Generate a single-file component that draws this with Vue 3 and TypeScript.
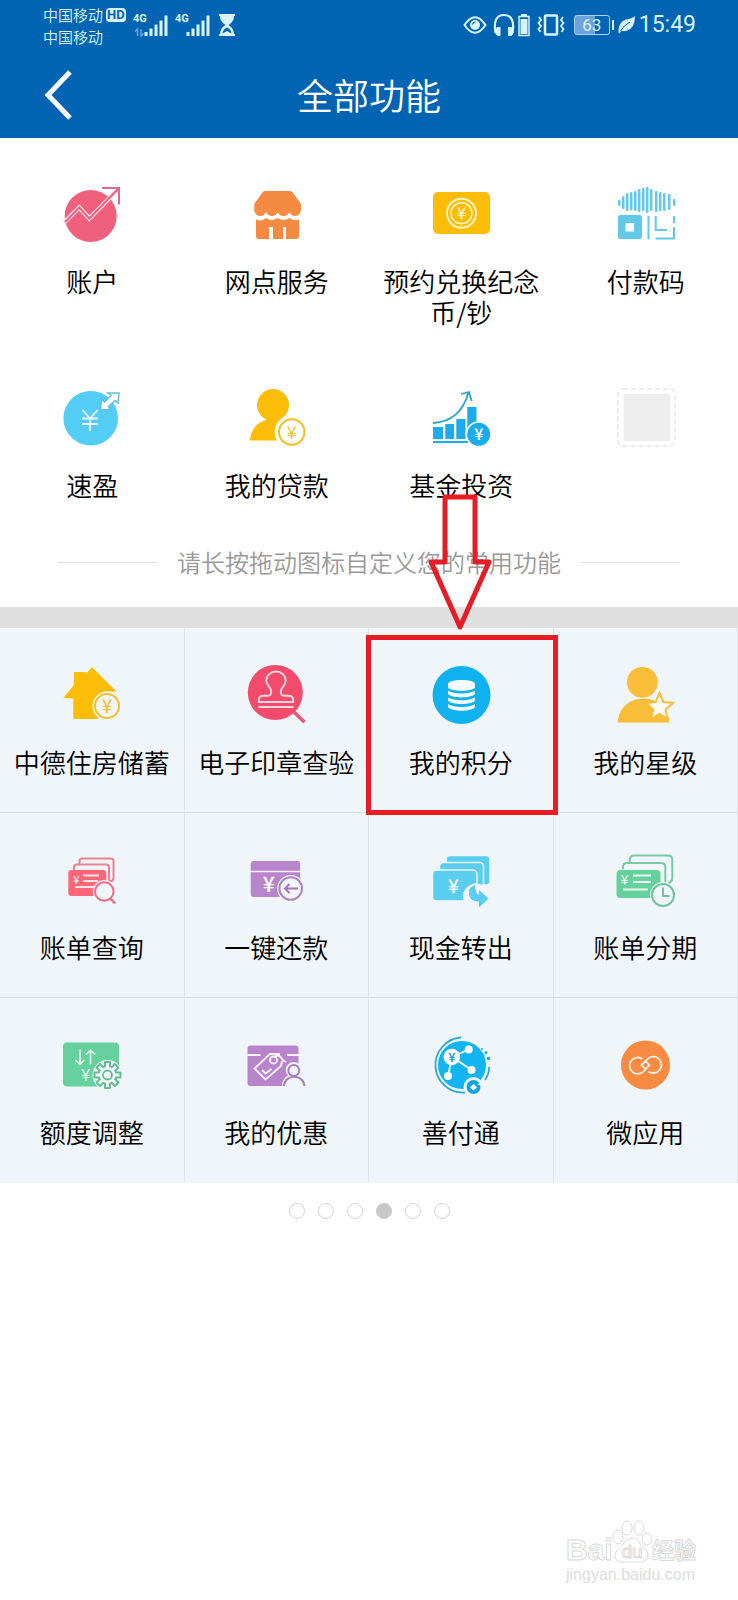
<script setup lang="ts">
interface Feature {
  icon: string
  label: string
  marked?: boolean
}

const favourites: Feature[] = [
  { icon: 'account', label: '账户' },
  { icon: 'branch', label: '网点服务' },
  { icon: 'banknote', label: '预约兑换纪念币/钞' },
  { icon: 'paycode', label: '付款码' },
  { icon: 'quick', label: '速盈' },
  { icon: 'loan', label: '我的贷款' },
  { icon: 'fund', label: '基金投资' },
  { icon: 'empty', label: '' },
]

const features: Feature[] = [
  { icon: 'house', label: '中德住房储蓄' },
  { icon: 'stamp', label: '电子印章查验' },
  { icon: 'points', label: '我的积分', marked: true },
  { icon: 'star', label: '我的星级' },
  { icon: 'bill', label: '账单查询' },
  { icon: 'repay', label: '一键还款' },
  { icon: 'cashout', label: '现金转出' },
  { icon: 'instalment', label: '账单分期' },
  { icon: 'limit', label: '额度调整' },
  { icon: 'offers', label: '我的优惠' },
  { icon: 'paylink', label: '善付通' },
  { icon: 'microapp', label: '微应用' },
]

const pageCount = 6
const currentPage = 4

// Left edge, top and bottom of each vertical stripe of the pay-code roof
const stripes: number[][] = [
  [2, 16, 22], [6, 12, 25], [10, 9, 27], [14, 8, 26], [18, 7, 27], [22, 5, 28], [26, 4, 27],
  [30, 3, 29], [34, 5, 27], [39, 7, 28], [43, 8, 27], [47, 9, 27], [52, 10, 26], [57, 15, 22],
]
const teeth = [0, 45, 90, 135, 180, 225, 270, 315]
</script>

<template>
  <div class="page">
    <svg class="defs" aria-hidden="true">
      <defs>
        <symbol id="account" viewBox="0 0 60 60">
          <circle cx="28.7" cy="32" r="26" fill="#f0607d" />
          <path d="M2 38.700 17.300 23.500 27.300 34.500 54 7.500" fill="none" stroke="#ffe3ea" stroke-width="4.500" />
          <path d="M3 38 17.300 23.500 27.300 34.500 56 5" fill="none" stroke="#f0607d" stroke-width="2" />
          <path d="M40 4H57V20.500" fill="none" stroke="#e36a86" stroke-width="2" />
        </symbol>
        <symbol id="branch" viewBox="0 0 60 60">
          <path d="M18 7H43Q45 7 46 9L54 20V27Q52 32 48 32 44 32 42.500 28 40.500 32 36.500 32 32.500 32 30.700 28 29 32 25 32 21 32 19 28 17 32 13.500 32 9 32 7.300 27V20L15 9Q16 7 18 7Z" fill="#f58b42" />
          <path d="M9 35.500Q15 38 19 34 24 38 30.500 34 37 38 42.500 34 47 37.500 52 35.500V52Q52 55 49 55H39V43H36V55H26V43H22V55H12Q9 55 9 52Z" fill="#f58b42" />
        </symbol>
        <symbol id="banknote" viewBox="0 0 60 60">
          <rect x="2" y="8" width="57" height="42" rx="5" fill="#fbbd06" />
          <circle cx="30.500" cy="29.300" r="14.500" fill="none" stroke="#fff6c8" stroke-width="2" />
          <circle cx="30.500" cy="29.300" r="10.500" fill="none" stroke="#fff6c8" stroke-width="1.500" />
          <text x="30.500" y="35" font-size="16" font-weight="500" text-anchor="middle" fill="#fff6c8">¥</text>
        </symbol>
        <symbol id="paycode" viewBox="0 0 60 60">
          <g fill="#62cae6">
            <rect v-for="s in stripes" :key="s[0]" :x="s[0]" :y="s[1]" width="2.500" :height="s[2] - s[1]" rx="1" />
            <path d="M4 31H24Q26 31 26 33V53Q26 55 24 55H4Q2 55 2 53V33Q2 31 4 31ZM9.500 39V47.500H18V39Z" fill-rule="evenodd" />
          </g>
          <path d="M32.500 32V55.500M39.700 32V46H51M58 32V39M58 43V54.500H39.500" fill="none" stroke="#62cae6" stroke-width="2" />
        </symbol>
        <symbol id="quick" viewBox="0 0 60 60">
          <circle cx="28.700" cy="30.300" r="27.300" fill="#53cdf6" />
          <path d="M20.500 22 28 30.500 35.500 22M28 30.500V43M20 30.500H36M20 36H36" fill="none" stroke="#effaff" stroke-width="1.800" />
          <path d="M57 5 56 15 53 12.500 46.500 18.500 49 21.500 38.500 22 39.500 11 42.500 14 49 7.500 46 5Z" fill="#fff" stroke="#62bddb" stroke-width="1.500" />
        </symbol>
        <symbol id="loan" viewBox="0 0 60 60">
          <circle cx="26" cy="17" r="16" fill="#fbbd06" />
          <path d="M16 24H36V32L42 38V52.500H2.700C4 43 8 35 19 32Z" fill="#fbbd06" />
          <circle cx="44.700" cy="44" r="17" fill="var(--surface)" />
          <circle cx="44.700" cy="44" r="12.700" fill="none" stroke="#f5bd20" stroke-width="2" />
          <text x="44.700" y="50.500" font-size="18" text-anchor="middle" fill="#f5bd20">¥</text>
        </symbol>
        <symbol id="fund" viewBox="0 0 60 60">
          <path d="M2 39H12V51H2ZM14.300 36H23V51H14.300ZM25.300 31H34.500V51H25.300ZM36.300 19H45.500V51H36.300ZM2 53H37V55H2Z" fill="#1aacec" />
          <path d="M2 35C20 34 32 25 37.500 4M30 6 38 4 40.700 13" fill="none" stroke="#2aa5d0" stroke-width="1.800" />
          <circle cx="47.700" cy="46.300" r="13" fill="var(--surface)" />
          <circle cx="47.700" cy="46.300" r="11.500" fill="#1aacec" />
          <text x="47.700" y="52" font-size="16" font-weight="500" text-anchor="middle" fill="#fff">¥</text>
        </symbol>
        <symbol id="empty" viewBox="0 0 60 60">
          <rect x="2" y="1" width="57" height="57" rx="5" fill="none" stroke="#dadada" stroke-dasharray="5 3" />
          <rect x="7.500" y="6" width="47" height="47" rx="1" fill="#eee" />
        </symbol>
        <symbol id="house" viewBox="0 0 60 60">
          <path d="M1.300 33 12 20V7H23L24 8.500 30 2.300 56 28V54H11.300V33.500Z" fill="#fbbd06" />
          <path d="M45 26.500H60V60H36V48Z" fill="var(--surface)" />
          <circle cx="45" cy="41" r="14.500" fill="var(--surface)" />
          <circle cx="45" cy="41" r="12" fill="none" stroke="#f3bf2d" stroke-width="2" />
          <text x="45" y="48" font-size="19" font-weight="400" text-anchor="middle" fill="#f3bf2d">¥</text>
        </symbol>
        <symbol id="stamp" viewBox="0 0 60 60">
          <circle cx="29.300" cy="27.500" r="27.500" fill="#f34b6c" />
          <path d="M48 47 58.500 57.300" stroke="#e8597a" stroke-width="3.500" />
          <path d="M12.800 37V35C12.800 32 15 30.800 18 30.800H22C25 30.800 26 27 24.500 24 22 20 20.300 19 20.300 15.500A9.700 9 0 0 1 39.700 15.500C39.700 19 38 20 35.500 24 34 27 35 30.800 38 30.800H42C45 30.800 47.200 32 47.200 35V37ZM12.300 42H47.500" fill="none" stroke="#ffd5df" stroke-width="2" />
        </symbol>
        <symbol id="points" viewBox="0 0 60 60">
          <circle cx="30.500" cy="30" r="29" fill="#10b1ef" />
          <g fill="#f5fbff">
            <path d="M17 19C17 13.500 44 13.500 44 19V22C44 27 17 27 17 22Z" />
            <path d="M17 25.500C22 29.500 39 29.500 44 25.500V29C40 33.500 21 33.500 17 29Z" />
            <path d="M17 32.200C22 36.200 39 36.200 44 32.200V35.700C40 40 21 40 17 35.700Z" />
            <path d="M17 39C22 43 39 43 44 39V42C40 47 21 47 17 42Z" />
          </g>
        </symbol>
        <symbol id="star" viewBox="0 0 60 60">
          <path d="M2.700 57.500C3 45 13 33.500 28 33.500S53 43 54.300 57.500Z" fill="#f9bd3a" />
          <circle cx="27.300" cy="17.300" r="16" fill="#f9bd3a" stroke="var(--surface)" />
          <path d="M44.500 28 48.300 37 58 38 50.500 44.500 52.800 54 44.500 49 36 54 38.300 44.500 31 38 40.700 37Z" fill="#fffdf6" stroke="#f9bd3a" stroke-width="2" />
        </symbol>
        <symbol id="bill" viewBox="0 0 60 60">
          <path d="M17.500 14V11Q17.500 8.500 20 8.500H48.500Q51.500 8.500 51.500 11V28Q51.500 31 49 31H47" fill="none" stroke="#eb8291" stroke-width="2" />
          <path d="M12 20V17Q12 14.500 15 14.500H44Q47 14.500 47 17V31" fill="none" stroke="#eb8291" stroke-width="2" />
          <rect x="6.300" y="20" width="38" height="26" rx="3" fill="#ff6778" />
          <path d="M21 25.500H37M21 31H36M13 37H33" stroke="#ffe4e8" stroke-width="2" />
          <text x="14.300" y="34" font-size="12" text-anchor="middle" fill="#fff">¥</text>
          <circle cx="42.300" cy="41.500" r="11.500" fill="var(--surface)" />
          <circle cx="42.300" cy="41.500" r="9.300" fill="none" stroke="#eb6f80" stroke-width="2" />
          <path d="M48.500 48.500 53 53.500" stroke="#eb6f80" stroke-width="2.500" />
        </symbol>
        <symbol id="repay" viewBox="0 0 60 60">
          <rect x="4.700" y="11" width="49.500" height="36" rx="3" fill="#b885cd" />
          <path d="M4 21.500H55" stroke="#f8eefd" stroke-width="1.500" />
          <text x="22.700" y="42" font-size="21" font-weight="500" text-anchor="middle" fill="#fff">¥</text>
          <circle cx="44.700" cy="38.500" r="13.500" fill="var(--surface)" />
          <circle cx="44.700" cy="38.500" r="11.300" fill="none" stroke="#ae83c4" stroke-width="2" />
          <path d="M52 38.500H39M43.500 34 39 38.500 43.500 43" fill="none" stroke="#a477bd" stroke-width="2" />
        </symbol>
        <symbol id="cashout" viewBox="0 0 60 60">
          <g fill="#5acdf1" stroke="var(--surface)" stroke-width="1.500">
            <rect x="15" y="5.500" width="44" height="29.500" rx="4" />
            <rect x="8.500" y="12.500" width="44" height="31" rx="4" />
            <rect x="1.500" y="20" width="44.500" height="31" rx="4" />
          </g>
          <path d="M59 35H52Q48 33 43 33.500 32 37 32 46 32 50 34 52H58Z" fill="var(--surface)" />
          <path d="M44 35Q37 37 38 45 40 52 48 51.500V57.500L57.500 48.500 48 40V45Q44.500 44 44 35Z" fill="#5acdf1" />
          <text x="22.300" y="43" font-size="19" font-weight="500" text-anchor="middle" fill="#fff">¥</text>
        </symbol>
        <symbol id="instalment" viewBox="0 0 60 60">
          <path d="M14.800 12V10Q14.800 5.500 19 5.500H53.500Q57.300 5.500 57.300 10V28Q57.300 32 53 33" fill="none" stroke="#7ac9a4" stroke-width="2" />
          <path d="M8 19V17Q8 13 12 13H46Q50.300 13 50.300 17V33" fill="none" stroke="#7ac9a4" stroke-width="2" />
          <rect x="1.500" y="20" width="44" height="28" rx="4" fill="#66d19c" />
          <path d="M18 25.500H36M18 32H36M8 39.500H33" stroke="#eafff4" stroke-width="2" />
          <text x="9.500" y="34.500" font-size="14" text-anchor="middle" fill="#fff">¥</text>
          <circle cx="48" cy="45" r="13" fill="var(--surface)" />
          <circle cx="48" cy="45" r="11" fill="none" stroke="#70c39c" stroke-width="2" />
          <path d="M48 37.500V46H54.500" fill="none" stroke="#70c39c" stroke-width="2" />
        </symbol>
        <symbol id="limit" viewBox="0 0 60 60">
          <rect x="1" y="7.500" width="56" height="44" rx="4" fill="#66d19c" />
          <path d="M18 14.500V29M13.500 25 18 29.500 22 25M28.500 29.500V15M24 19.500 28.500 15 33 19.500" fill="none" stroke="#eafff4" stroke-width="1.500" />
          <text x="23.600" y="46" font-size="17" text-anchor="middle" fill="#eafff4">¥</text>
          <circle cx="45.500" cy="40" r="15" fill="var(--surface)" />
          <g fill="#67bd93">
            <rect v-for="a in teeth" :key="a" x="42" y="26" width="7" height="7" rx="1" :transform="`rotate(${a} 45.500 40)`" />
          </g>
          <circle cx="45.500" cy="40" r="9" fill="var(--surface)" stroke="#67bd93" stroke-width="2" />
          <g fill="var(--surface)">
            <rect v-for="a in teeth" :key="a" x="44" y="28" width="3" height="6" :transform="`rotate(${a} 45.500 40)`" />
          </g>
          <circle cx="45.500" cy="40" r="4.500" fill="none" stroke="#67bd93" stroke-width="1.800" />
        </symbol>
        <symbol id="offers" viewBox="0 0 60 60">
          <rect x="1.500" y="10.500" width="51" height="40.500" rx="3" fill="#b885cd" />
          <g fill="none" stroke="#fbf3ff" stroke-width="1.800">
            <path d="M1.500 20H14.500M41 20H53M34 19H24L8.500 33.500 19.500 44.500 35 31 36 26" />
            <circle cx="27.500" cy="25" r="3.500" />
            <path d="M28 22.500Q32 18.500 35 22.500T40 27M16 35 19.500 38.500 25.500 34" />
          </g>
          <path d="M36 52C36 45 39 42 42 40.500A8 8 0 1 1 53.500 40.500C57 42 60 46 60 52Z" fill="var(--surface)" />
          <g fill="none" stroke="#a67fbd" stroke-width="2">
            <circle cx="47.800" cy="35.500" r="5.500" />
            <path d="M38 51C38.500 38.500 57.500 38.500 58.500 51" />
          </g>
        </symbol>
        <symbol id="paylink" viewBox="0 0 60 60">
          <circle cx="31" cy="30" r="24" fill="#12b4f1" />
          <path d="M30 2.500A27.500 27.500 0 1 0 34 57.500M54 45Q58 39 58.300 32" fill="none" stroke="#28aad9" stroke-width="1.800" />
          <path d="M21 22 37.500 14.500M21 22 40.500 35M21 22 17 41" stroke="#fff" stroke-width="1.800" />
          <g fill="#fff">
            <circle cx="20.800" cy="22" r="8.300" />
            <circle cx="37.700" cy="14.500" r="4" />
            <circle cx="40.500" cy="35" r="4" />
            <circle cx="17" cy="41" r="4" />
          </g>
          <text x="20.800" y="26.500" font-size="12" font-weight="700" text-anchor="middle" fill="#12a5e0">¥</text>
          <g fill="#28aad9">
            <circle cx="51" cy="14" r="1" />
            <circle cx="55" cy="17.500" r="1.500" />
            <circle cx="57.500" cy="23.500" r="1.800" />
            <circle cx="53" cy="20" r="0.800" />
          </g>
          <circle cx="42.500" cy="52" r="10" fill="var(--surface)" />
          <circle cx="42.500" cy="52" r="7" fill="#12a5e0" />
          <path d="M42.500 49 46 52.300 42.500 55.500 39 52.300ZM46 50 51 46.500V50Z" fill="#fff" />
        </symbol>
        <symbol id="microapp" viewBox="0 0 60 60">
          <circle cx="30.500" cy="30" r="24.500" fill="#f68b41" />
          <path d="M27.500 24A8.200 8.200 0 1 0 29 36L34.500 30 30.500 26 26.500 30 30.500 34M33.500 36.500A8.200 8.200 0 1 0 32 24.500L29.500 27" fill="none" stroke="#fff1e5" stroke-width="1.800" />
        </symbol>
      </defs>
    </svg>

    <header class="top">
      <div class="status">
        <div class="carriers">
          <div class="carrier">中国移动<span class="hd">HD</span></div>
          <div class="carrier">中国移动</div>
        </div>
        <div v-for="n in 2" :key="n" class="signal">
          <span class="net">4G</span>
          <svg width="36" height="24" viewBox="0 0 36 24" aria-hidden="true">
            <path d="M13 19V23M18 15.500V23M23 11.500V23M28 7.500V23M33 2.500V23" stroke="#d9f4ff" stroke-width="3" />
            <path v-if="n === 1" d="M4.500 23V16L2 18.500M8 16V23L10.500 20.500" fill="none" stroke="#6aa6d6" stroke-width="1.500" />
          </svg>
        </div>
        <svg class="hourglass" width="18" height="24" viewBox="0 0 18 24" aria-hidden="true">
          <path d="M2 2H16V3Q16 9 10.500 12 16 15 16 22H2Q2 15 7.500 12 2 9 2 3Z" fill="#d9f4ff" />
          <path d="M4.500 20.500Q5 16 9 14.500 13 16 13.500 20.500L9 18Z" fill="#0064b2" />
          <path d="M1 2H17M1 22H17" stroke="#d9f4ff" stroke-width="2" />
        </svg>
        <div class="status-right">
          <svg width="24" height="24" viewBox="0 0 24 24" aria-hidden="true">
            <path d="M1.500 12Q12-3.500 22.500 12 12 27.500 1.500 12Z" fill="none" stroke="#d9f4ff" stroke-width="2" />
            <circle cx="12" cy="12" r="5" fill="#d9f4ff" />
            <path d="M9.500 11.500Q10 9 12.500 9" fill="none" stroke="#0064b2" stroke-width="1.200" />
          </svg>
          <svg class="headset" width="38" height="24" viewBox="0 0 38 24" aria-hidden="true">
            <path d="M2.500 20Q-.5 2 11 2T19.500 20" fill="none" stroke="#d9f4ff" stroke-width="2.200" />
            <path d="M4 14H7.500V23H5Q2 22 2 18ZM15 14H18.500L20.500 18Q20.500 22 18 23H15Z" fill="#d9f4ff" />
            <rect x="26" y="3.500" width="10" height="19" fill="none" stroke="#d9f4ff" stroke-width="1.500" />
            <path d="M28 1H34V3H28ZM27.500 6H34.500V21H27.500Z" fill="#d9f4ff" />
          </svg>
          <svg width="28" height="24" viewBox="0 0 28 24" aria-hidden="true">
            <rect x="8" y="2.500" width="12" height="19" rx="1" fill="none" stroke="#d9f4ff" stroke-width="2.500" />
            <path d="M2 4 4 7 1.500 10 4 13 1.500 16 3.500 19M26 4 24 7 26.500 10 24 13 26.500 16 24.500 19" fill="none" stroke="#d9f4ff" stroke-width="1.800" />
          </svg>
          <div class="battery"><span class="level">63</span></div>
          <svg class="leaf" width="18" height="20" viewBox="0 0 18 20" aria-hidden="true">
            <path d="M17 1Q17 14 8 16 5 16.500 3.500 15.500L1.500 18.500.5 17.500Q0 7 8 4.500 14 3.500 17 1Z" fill="#d9f4ff" />
            <path d="M2.500 16Q5 11 12 7" fill="none" stroke="#0064b2" />
          </svg>
          <time class="clock">15:49</time>
        </div>
      </div>
      <nav class="bar">
        <button class="back" type="button" aria-label="返回">
          <svg width="30" height="50" viewBox="0 0 30 50" aria-hidden="true">
            <path d="M27 2 5 25 27 48" fill="none" stroke="#fff" stroke-width="5" />
          </svg>
        </button>
        <h1>全部功能</h1>
      </nav>
    </header>

    <main>
      <section class="grid favourites">
        <button v-for="f in favourites" :key="f.icon" class="cell" type="button" :aria-label="f.label || '空位'">
          <svg class="icon" viewBox="0 0 60 60" aria-hidden="true"><use :href="`#${f.icon}`" /></svg>
          <span class="label">{{ f.label }}</span>
        </button>
      </section>
      <p class="hint"><span>请长按拖动图标自定义您的常用功能</span></p>

      <section class="grid features">
        <button v-for="f in features" :key="f.icon" class="cell" type="button">
          <svg class="icon" viewBox="0 0 60 60" aria-hidden="true"><use :href="`#${f.icon}`" /></svg>
          <span class="label">{{ f.label }}</span>
          <template v-if="f.marked">
            <span class="frame"></span>
            <svg class="arrow" width="66" height="138" viewBox="0 0 66 138" aria-hidden="true">
              <path d="M18 3H48V68H62L33 133 4 68H18Z" fill="none" stroke="#e81c24" stroke-width="5" stroke-linejoin="round" />
            </svg>
          </template>
        </button>
      </section>

      <div class="dots">
        <button v-for="n in pageCount" :key="n" type="button" class="dot" :class="{ active: n === currentPage }" :aria-label="`第${n}页`"></button>
      </div>
    </main>

    <footer class="watermark">
      <div class="brand">
        <span class="bai">Bai</span>
        <span class="paw">
          <svg width="40" height="44" viewBox="0 0 40 44" aria-hidden="true">
            <g fill="#fff" stroke="#d9d9d9">
              <ellipse cx="6" cy="17" rx="5" ry="7" />
              <ellipse cx="15" cy="8" rx="5" ry="7" />
              <ellipse cx="27" cy="8" rx="5" ry="7" />
              <ellipse cx="35" cy="19" rx="5" ry="6" />
              <path d="M20 18Q25 18 29 25 37 31 36 36 34 43 27 42H13Q5 43 3 37 2 32 9 27 15 18 20 18Z" />
            </g>
          </svg>
          <span class="du">du</span>
        </span>
        <span class="exp">经验</span>
      </div>
      <div class="site">jingyan.baidu.com</div>
    </footer>
  </div>
</template>

<style>
body {
  margin: 0;
  background: #fff;
}
</style>

<style scoped>
.page {
  --surface: #fff;
  position: relative;
  min-height: 100vh;
  background: #fff;
  color: #000;
  font-family: "Noto Sans CJK SC", sans-serif;
  font-weight: 350;
}
.defs {
  position: absolute;
  width: 0;
  height: 0;
}
.defs text {
  font-family: "Noto Sans CJK SC", sans-serif;
}
button {
  border: 0;
  padding: 0;
  margin: 0;
  background: none;
  font: inherit;
  color: inherit;
}
.top {
  background: #0064b2;
  color: #fff;
}
.status {
  display: flex;
  align-items: flex-start;
  height: 50px;
  padding: 4px 42px 0 43px;
  box-sizing: border-box;
  color: #d9f4ff;
}
.carriers {
  width: 84px;
}
.carrier {
  display: flex;
  align-items: center;
  gap: 3px;
  font-size: 15px;
  line-height: 22px;
  white-space: nowrap;
}
.hd {
  padding: 0 1px;
  border-radius: 4px;
  background: #d9f4ff;
  color: #0064b2;
  font-family: Roboto, sans-serif;
  font-size: 13px;
  font-weight: 700;
  line-height: 14px;
}
.signal {
  position: relative;
  width: 36px;
  height: 24px;
  margin: 9px 0 0 6px;
}
.signal svg,
.status-right svg {
  display: block;
}
.net {
  position: absolute;
  left: 0;
  top: 0;
  font-family: Roboto, sans-serif;
  font-size: 11px;
  font-weight: 700;
  line-height: 12px;
}
.hourglass {
  margin: 9px 0 0 7px;
}
.status-right {
  display: flex;
  align-items: center;
  height: 24px;
  margin: 9px 0 0 auto;
}
.headset {
  margin: 0 6px;
}
.battery {
  position: relative;
  width: 36px;
  height: 20px;
  box-sizing: border-box;
  margin: 0 8px 0 9px;
  border: 1px solid #a8d4f2;
  border-radius: 3px;
  background: linear-gradient(90deg, #6ca4d9 60%, #0064b2 60%);
  text-align: center;
}
.battery::after {
  content: "";
  position: absolute;
  right: -5px;
  top: 4px;
  width: 2px;
  height: 10px;
  background: #d9f4ff;
}
.level {
  display: block;
  font-family: Roboto, sans-serif;
  font-size: 17px;
  font-weight: 400;
  line-height: 18px;
}
.clock {
  margin-left: 3px;
  font-family: Roboto, sans-serif;
  font-size: 23px;
  font-weight: 400;
  line-height: 24px;
}
.bar {
  position: relative;
  display: flex;
  align-items: center;
  justify-content: center;
  height: 88px;
}
.back {
  position: absolute;
  left: 43px;
  top: 20px;
}
.back svg {
  display: block;
}
h1 {
  margin: 0;
  font-size: 36px;
  font-weight: 350;
  line-height: 44px;
}
.grid {
  display: grid;
  grid-template-columns: repeat(4, 1fr);
}
.cell {
  position: relative;
  display: flex;
  flex-direction: column;
  align-items: center;
  justify-content: flex-start;
  gap: 21px;
  min-width: 0;
}
.icon {
  display: block;
  width: 60px;
  height: 60px;
}
.label {
  max-width: 168px;
  font-size: 26px;
  line-height: 31px;
}
.favourites {
  grid-auto-rows: 158px;
  row-gap: 46px;
  padding-top: 46px;
}
.hint {
  display: flex;
  align-items: center;
  gap: 20px;
  margin: 0;
  padding: 0 58px 29px;
  color: #999;
  font-size: 24px;
  line-height: 32px;
  white-space: nowrap;
}
.hint::before,
.hint::after {
  content: "";
  flex: 1;
  height: 1px;
  background: #ddd;
}
.features {
  --surface: #f0f5f9;
  grid-auto-rows: 185px;
  border-top: 21px solid #dfdfdf;
  background: #f0f5f9;
}
.features .cell {
  padding-top: 37px;
  border-right: 1px solid #dde3e9;
  border-bottom: 1px solid #d5dfe6;
}
.features .cell:nth-child(n + 9) {
  border-bottom: 0;
}
.frame {
  position: absolute;
  inset: 7px -5px -3px -3px;
  border: 5px solid #e81c24;
  z-index: 1;
}
.arrow {
  position: absolute;
  left: 50%;
  top: -134px;
  margin-left: -34px;
  z-index: 1;
}
.dots {
  display: flex;
  justify-content: center;
  gap: 13px;
  padding-top: 20px;
}
.dot {
  width: 16px;
  height: 16px;
  border: 1px solid #d4d4d4;
  border-radius: 50%;
}
.dot.active {
  border-color: #c8c8c8;
  background: #c8c8c8;
}
.watermark {
  position: absolute;
  right: 40px;
  bottom: 14px;
  width: 132px;
  color: #fff;
  font-family: "Liberation Sans", "Noto Sans CJK SC", sans-serif;
  -webkit-text-stroke: 1px #d9d9d9;
}
.brand {
  display: flex;
  align-items: flex-end;
  height: 44px;
}
.bai {
  width: 46px;
  font-size: 30px;
  font-weight: 700;
  line-height: 28px;
}
.paw {
  position: relative;
  width: 40px;
  height: 44px;
}
.paw svg {
  display: block;
}
.du {
  position: absolute;
  inset: auto 0 2px;
  font-size: 19px;
  line-height: 20px;
  text-align: center;
}
.exp {
  font-size: 22px;
  font-weight: 700;
  line-height: 26px;
}
.site {
  color: #dcdcdc;
  font-size: 16px;
  line-height: 22px;
  -webkit-text-stroke: 0;
}
</style>
